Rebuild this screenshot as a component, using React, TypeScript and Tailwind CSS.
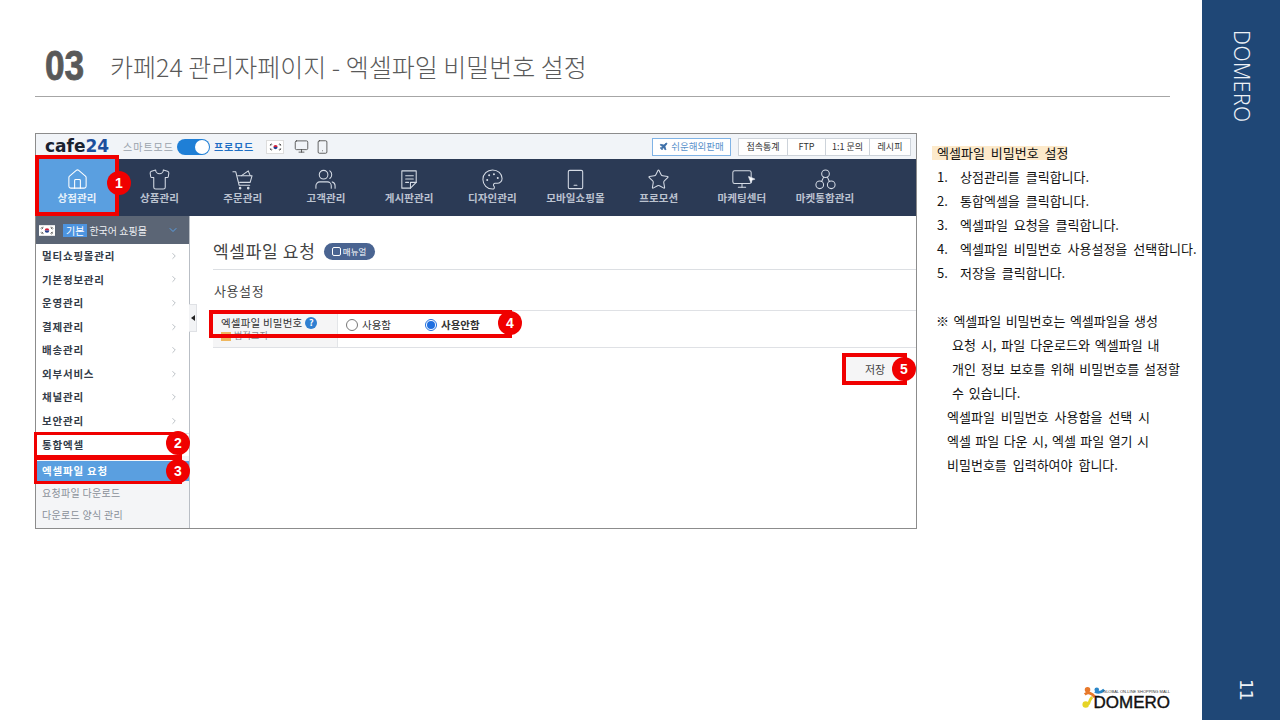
import React from "react";
import { House, Shirt, Palette, Star, Monitor, Smartphone, ChevronRight, ChevronDown, Plane, MousePointer2 } from "lucide-react";

const KR = "font-['Noto_Sans_CJK_KR','Noto_Sans',sans-serif]";

function Flag({ className }: { className: string }) {
  return (
    <svg viewBox="0 0 24 16" className={className}>
      <rect width="24" height="16" fill="#fff" />
      <path d="M8.6 8a3.4 3.4 0 0 1 6.8 0z" fill="#d0213a" />
      <path d="M8.6 8a3.4 3.4 0 0 0 6.8 0z" fill="#1f3f8f" />
      <g stroke="#222" strokeWidth="1.2">
        <path d="M3 5l2.5-2.5M4 6l2.5-2.5M17.5 3.5L20 6M18.5 2.5L21 5M3 11l2.5 2.5M4 10l2.5 2.5M17.5 12.5L20 10M18.5 13.5L21 11" />
      </g>
    </svg>
  );
}

function Badge({ n, className }: { n: number; className: string }) {
  return (
    <div className={`absolute w-[24px] h-[24px] rounded-full bg-[#f00000] text-white text-[14px] font-bold flex items-center justify-center font-['Liberation_Sans',sans-serif] ${className}`}>
      {n}
    </div>
  );
}

const iconClass = "w-[23px] h-[23px]";

function Outline({ children }: { children: React.ReactNode }) {
  return (
    <svg viewBox="0 0 24 24" className={iconClass} fill="none" stroke="currentColor" strokeWidth="1.1" strokeLinecap="round" strokeLinejoin="round">
      {children}
    </svg>
  );
}

function MarketingIcon() {
  return (
    <div className="relative w-[24px] h-[22px]">
      <Monitor className="w-[24px] h-[22px]" strokeWidth={1.1} />
      <MousePointer2 className="absolute right-[-2px] top-[7px] w-[9px] h-[9px] fill-white" />
    </div>
  );
}

const navItems: [string, React.ReactNode][] = [
  ["상점관리", <House className={iconClass} strokeWidth={1.1} />],
  ["상품관리", <Shirt className={iconClass} strokeWidth={1.1} />],
  ["주문관리", (
    <Outline>
      <path d="M2 4h3l3.5 14h11" />
      <path d="M7 8h15l-2 7H9" />
      <path d="M11 8l7-5 2 5" />
      <circle cx="9.5" cy="21" r="0.8" fill="currentColor" />
      <circle cx="18" cy="21" r="0.8" fill="currentColor" />
    </Outline>
  )],
  ["고객관리", (
    <Outline>
      <circle cx="10" cy="7" r="4.5" />
      <path d="M2 21v-2.500a4 4 0 0 1 4-4h8a4 4 0 0 1 4 4V21" />
      <path d="M16.500 3a5 5 0 0 1 0 8" />
      <path d="M19 14.500a4 4 0 0 1 3 4V21" />
    </Outline>
  )],
  ["게시판관리", (
    <Outline>
      <path d="M4 3h15v12l-6 6H4z" />
      <path d="M13 21v-6h6" />
      <path d="M8 8h8M8 11.500h8M8 15h3" />
    </Outline>
  )],
  ["디자인관리", <Palette className={iconClass} strokeWidth={1.1} />],
  ["모바일쇼핑몰", (
    <Outline>
      <rect x="4.500" y="2.500" width="15" height="19" rx="1.500" />
      <path d="M10.500 18h3" />
    </Outline>
  )],
  ["프로모션", <Star className={iconClass} strokeWidth={1.1} />],
  ["마케팅센터", <MarketingIcon />],
  ["마켓통합관리", (
    <Outline>
      <circle cx="12" cy="6" r="4" />
      <circle cx="6" cy="17.500" r="4" />
      <circle cx="18" cy="17.500" r="4" />
      <path d="M10 9.500l-2 4.500M14 9.500l2 4.500" />
    </Outline>
  )],
];

const sideItems = ["멀티쇼핑몰관리", "기본정보관리", "운영관리", "결제관리", "배송관리", "외부서비스", "채널관리", "보안관리"];

function TopBar() {
  return (
    <div className="h-[25px] bg-[#f1f4f8] flex items-center pl-[9px] pr-[5px]">
      <span className="font-['DejaVu_Sans',sans-serif] font-bold text-[17px] leading-none text-[#1a2230] w-[67px] whitespace-nowrap">
        cafe<span className="text-[#1d4f9c]">24</span>
      </span>
      <span className="ml-[11px] text-[10px] text-[#9aa3ad] tracking-[1px] whitespace-nowrap">스마트모드</span>
      <div className="ml-[3px] w-[33px] h-[16px] rounded-full bg-[#1f7fd6] relative">
        <div className="absolute right-[1px] top-[1px] w-[14px] h-[14px] rounded-full bg-white" />
      </div>
      <span className="ml-[4px] text-[10px] font-bold text-[#1f6fc4] tracking-[0.8px] whitespace-nowrap">프로모드</span>
      <div className="ml-[12px] w-[18px] h-[14px] border border-[#ddd] bg-white flex items-center justify-center">
        <Flag className="w-[15px] h-[10px]" />
      </div>
      <Monitor className="ml-[10px] w-[15px] h-[15px] text-[#444]" strokeWidth={1.3} />
      <Smartphone className="ml-[6px] w-[15px] h-[16px] text-[#444]" strokeWidth={1.3} />
      <div className="ml-auto flex items-center">
        <div className="w-[79px] h-[18px] border border-[#7fb3e6] bg-white flex items-center justify-center gap-[3px] text-[#5a93cc] text-[9.5px]">
          <Plane className="w-[9px] h-[9px] fill-[#3d6fa8] text-[#3d6fa8]" />
          쉬운해외판매
        </div>
        <div className="ml-[7px] h-[18px] flex border border-[#cdd3da] bg-white text-[9px] text-[#333] divide-x divide-[#cdd3da]">
          <div className="w-[49px] flex items-center justify-center">접속통계</div>
          <div className="w-[38px] flex items-center justify-center">FTP</div>
          <div className="w-[44px] flex items-center justify-center">1:1 문의</div>
          <div className="w-[40px] flex items-center justify-center">레시피</div>
        </div>
      </div>
    </div>
  );
}

function NavBar() {
  return (
    <div className="h-[57px] bg-[#2b3a55] flex text-[#d5dbe5]">
      {navItems.map(([label, icon], i) => (
        <div key={label} className={`flex flex-col items-center pt-[8px] ${i === 0 ? "w-[82px] bg-[#5a9fe0] text-white" : "w-[83.2px]"}`}>
          <div className="h-[24px] flex items-center">{icon}</div>
          <span className="mt-[0px] text-[10.5px] leading-[14px] font-bold tracking-[0.1px] opacity-85">{label}</span>
        </div>
      ))}
    </div>
  );
}

function Sidebar() {
  return (
    <div className="w-[154px] shrink-0 bg-[#f4f5f7] border-r border-[#b9bec5] flex flex-col">
      <div className="h-[28px] bg-[#5b6575] flex items-center pl-[3px] pr-[10px] text-white">
        <Flag className="w-[16px] h-[11px]" />
        <span className="ml-[8px] px-[3px] bg-[#4d94e0] text-[10px] leading-[13px]">기본</span>
        <span className="ml-[2px] text-[10px] text-[#eef0f3] whitespace-nowrap">한국어 쇼핑몰</span>
        <ChevronDown className="ml-auto w-[12px] h-[12px] text-[#5aa0e6]" strokeWidth={2} />
      </div>
      <div className="bg-white flex flex-col">
        {sideItems.map((s) => (
          <div key={s} className="h-[23.6px] flex items-center justify-between pl-[6px] pr-[10px] text-[10.5px] font-bold tracking-[0.8px] text-[#333c48]">
            {s}
            <ChevronRight className="w-[10px] h-[10px] text-[#9aa1a9]" strokeWidth={1.6} />
          </div>
        ))}
      </div>
      <div className="h-[23px] bg-white border-t border-[#dcdfe3] flex items-center pl-[6px] text-[10.5px] font-bold tracking-[0.8px] text-[#333c48]">통합엑셀</div>
      <div className="mt-[5px] h-[20px] bg-[#5a9fe0] flex items-center pl-[6px] text-[10.5px] font-bold tracking-[0.8px] text-white">엑셀파일 요청</div>
      <div className="h-[22px] mt-[1px] flex items-center pl-[6px] text-[10px] tracking-[0.3px] text-[#8a9099]">요청파일 다운로드</div>
      <div className="h-[22px] flex items-center pl-[6px] text-[10px] tracking-[0.3px] text-[#8a9099]">다운로드 양식 관리</div>
    </div>
  );
}

function Content() {
  return (
    <div className="flex-1 bg-white pl-[23px] pt-[24px] relative">
      <div className="absolute left-[-1px] top-[88px] w-[8px] h-[28px] bg-[#f2f3f5] border border-l-0 border-[#dfe1e5] flex items-center justify-center">
        <div className="w-0 h-0 border-y-[3px] border-y-transparent border-r-[4px] border-r-[#222]" />
      </div>
      <div className="h-[30px] flex items-start border-b border-[#dcdfe3]">
        <span className="text-[17px] leading-[22px] tracking-[0.7px] text-[#444] whitespace-nowrap">엑셀파일 요청</span>
        <span className="ml-[8px] mt-[3px] w-[51px] h-[17px] rounded-full bg-[#4a6491] flex items-center justify-center gap-[2px] text-white text-[8.5px]">
          <span className="w-[9px] h-[9px] border border-white rounded-[2px]" />
          매뉴얼
        </span>
      </div>
      <div className="mt-[12px] pl-[1px] text-[13px] leading-[18px] tracking-[0.6px] text-[#444]">사용설정</div>
      <div className="mt-[10px] h-[38px] flex border-t border-b border-[#dfe1e5]">
        <div className="w-[125px] bg-[#f5f5f6] border-r border-[#e3e5e8] pl-[8px] pt-[5px] text-[10.5px] leading-[14px] tracking-[0.2px] text-[#333] relative overflow-hidden">
          <div className="flex items-center gap-[3px]">
            엑셀파일 비밀번호
            <span className="w-[12px] h-[12px] rounded-full bg-[#2f7fd1] text-white text-[9px] font-bold flex items-center justify-center">?</span>
          </div>
          <div className="flex items-center gap-[3px] text-[#888] text-[9px] leading-[12px]">
            <span className="w-[10px] h-[9px] bg-[#efb75f]" />
            법적고지
          </div>
        </div>
        <div className="flex items-start pt-[6px] pl-[8px] text-[10.5px] leading-[15px] text-[#333]">
          <span className="w-[12px] h-[12px] mt-[2px] rounded-full border border-[#777] bg-white" />
          <span className="ml-[4px] w-[63px]">사용함</span>
          <span className="w-[12px] h-[12px] mt-[2px] rounded-full border border-[#1f6fe0] bg-white flex items-center justify-center">
            <span className="w-[8px] h-[8px] rounded-full bg-[#1f6fe0]" />
          </span>
          <span className="ml-[4px] font-bold">사용안함</span>
        </div>
      </div>
      <div className="flex justify-end mt-[8px] pr-[10px]">
        <div className="w-[62px] h-[26px] bg-[#f5f5f6] flex items-center justify-center text-[11px] text-[#444]">저장</div>
      </div>
    </div>
  );
}

function Logo() {
  return (
    <div className="flex items-end">
      <svg viewBox="0 0 26 26" className="w-[24px] h-[24px] mb-[2px]">
        <circle cx="6" cy="4" r="3" fill="#e8792b" />
        <path d="M3 9c4-3 8-1 11 3" stroke="#e8792b" strokeWidth="3" fill="none" />
        <circle cx="16" cy="4" r="2.500" fill="#2a86c8" />
        <path d="M14 6c4 2 7 1 10-2" stroke="#2a86c8" strokeWidth="3" fill="none" />
        <circle cx="4" cy="20" r="3.500" fill="#e6d427" />
        <path d="M7 20c1-4 2-6 4-8" stroke="#e6d427" strokeWidth="3" fill="none" />
      </svg>
      <div className="flex flex-col items-end font-['Liberation_Sans',sans-serif] leading-none ml-[-12px]">
        <span className="text-[4px] leading-[5px] text-[#333] whitespace-nowrap">GLOBAL ON-LINE SHOPPING MALL</span>
        <span className="text-[17px] leading-[18px] text-[#111] [-webkit-text-stroke:0.4px_#111]">DOMERO</span>
      </div>
    </div>
  );
}

const steps = ["상점관리를 클릭합니다.", "통합엑셀을 클릭합니다.", "엑셀파일 요청을 클릭합니다.", "엑셀파일 비밀번호 사용설정을 선택합니다.", "저장을 클릭합니다."];

function Notes() {
  return (
    <div className="ml-[15px] pt-[8px] text-[13px] leading-[24px] text-[#111] [word-spacing:3px] whitespace-nowrap">
      <div className="h-[24px] flex items-center">
        <div className="w-[135px] shrink-0 bg-[#fdeacb] pl-[5px] leading-[14px]">엑셀파일 비밀번호 설정</div>
      </div>
      {steps.map((s, i) => (
        <div key={s} className="flex pl-[5px]">
          <span className="w-[23px]">{i + 1}.</span>
          <span>{s}</span>
        </div>
      ))}
      <div className="h-[24px]" />
      <div className="pl-[4px] [word-spacing:1.5px]">※ 엑셀파일 비밀번호는 엑셀파일을 생성</div>
      <div className="pl-[20px] [word-spacing:2px]">요청 시, 파일 다운로드와 엑셀파일 내</div>
      <div className="pl-[20px] [word-spacing:2px]">개인 정보 보호를 위해 비밀번호를 설정할</div>
      <div className="pl-[20px] [word-spacing:2px]">수 있습니다.</div>
      <div className="pl-[15px]">엑셀파일 비밀번호 사용함을 선택 시</div>
      <div className="pl-[15px] [word-spacing:1.5px]">엑셀 파일 다운 시, 엑셀 파일 열기 시</div>
      <div className="pl-[15px]">비밀번호를 입력하여야 합니다.</div>
    </div>
  );
}

export default function App() {
  return (
    <div className={`w-[1280px] h-[720px] bg-white flex overflow-hidden ${KR}`}>
      <div className="w-[1202px] flex flex-col pl-[35px] pr-[32px]">
        <div className="h-[97px] shrink-0 border-b border-[#a6a6a6] flex items-end pb-[6px] pl-[10px]">
          <span className="w-[42px] font-['Liberation_Sans',sans-serif] font-bold text-[42px] leading-[48px] text-[#595959] origin-left scale-x-[0.84] [-webkit-text-stroke:0.8px_#595959]">03</span>
          <span className="ml-[23px] mb-[6px] text-[25px] leading-[36px] font-light text-[#595959] whitespace-nowrap">카페24 관리자페이지 - 엑셀파일 비밀번호 설정</span>
        </div>
        <div className="mt-[36px] flex">
          <div className="w-[882px] shrink-0 h-[396px] border border-[#8c8c8c] flex flex-col relative">
            <TopBar />
            <NavBar />
            <div className="flex-1 flex min-h-0">
              <Sidebar />
              <Content />
            </div>
            <div className="absolute left-[-1px] top-[21px] w-[84px] h-[61px] border-[4px] border-[#f00000]" />
            <Badge n={1} className="left-[71px] top-[37px]" />
            <div className="absolute left-[-2px] top-[298px] w-[148px] h-[26px] border-[3px] border-[#f00000]" />
            <Badge n={2} className="left-[130px] top-[297px]" />
            <div className="absolute left-[-2px] top-[323px] w-[148px] h-[27px] border-[3px] border-[#f00000]" />
            <Badge n={3} className="left-[130px] top-[325px]" />
            <div className="absolute left-[173px] top-[176px] w-[303px] h-[28px] border-[4px] border-[#f00000]" />
            <Badge n={4} className="left-[462px] top-[177px]" />
            <div className="absolute left-[806px] top-[219px] w-[65px] h-[32px] border-[4px] border-[#f00000]" />
            <Badge n={5} className="left-[856px] top-[223px]" />
          </div>
          <Notes />
        </div>
        <div className="mt-auto mb-[8px] self-end">
          <Logo />
        </div>
      </div>
      <div className="w-[78px] bg-[#1f4776] text-[#eef2f7] flex flex-col items-center justify-between pt-[30px] pb-[20px]">
        <span className="[writing-mode:vertical-rl] text-[21px] leading-none font-['Noto_Sans',sans-serif] font-light tracking-[0.5px]">DOMERO</span>
        <span className="ml-[10px] [writing-mode:vertical-rl] text-[18px] leading-none font-['DejaVu_Sans',sans-serif] tracking-[-1px]">11</span>
      </div>
    </div>
  );
}
